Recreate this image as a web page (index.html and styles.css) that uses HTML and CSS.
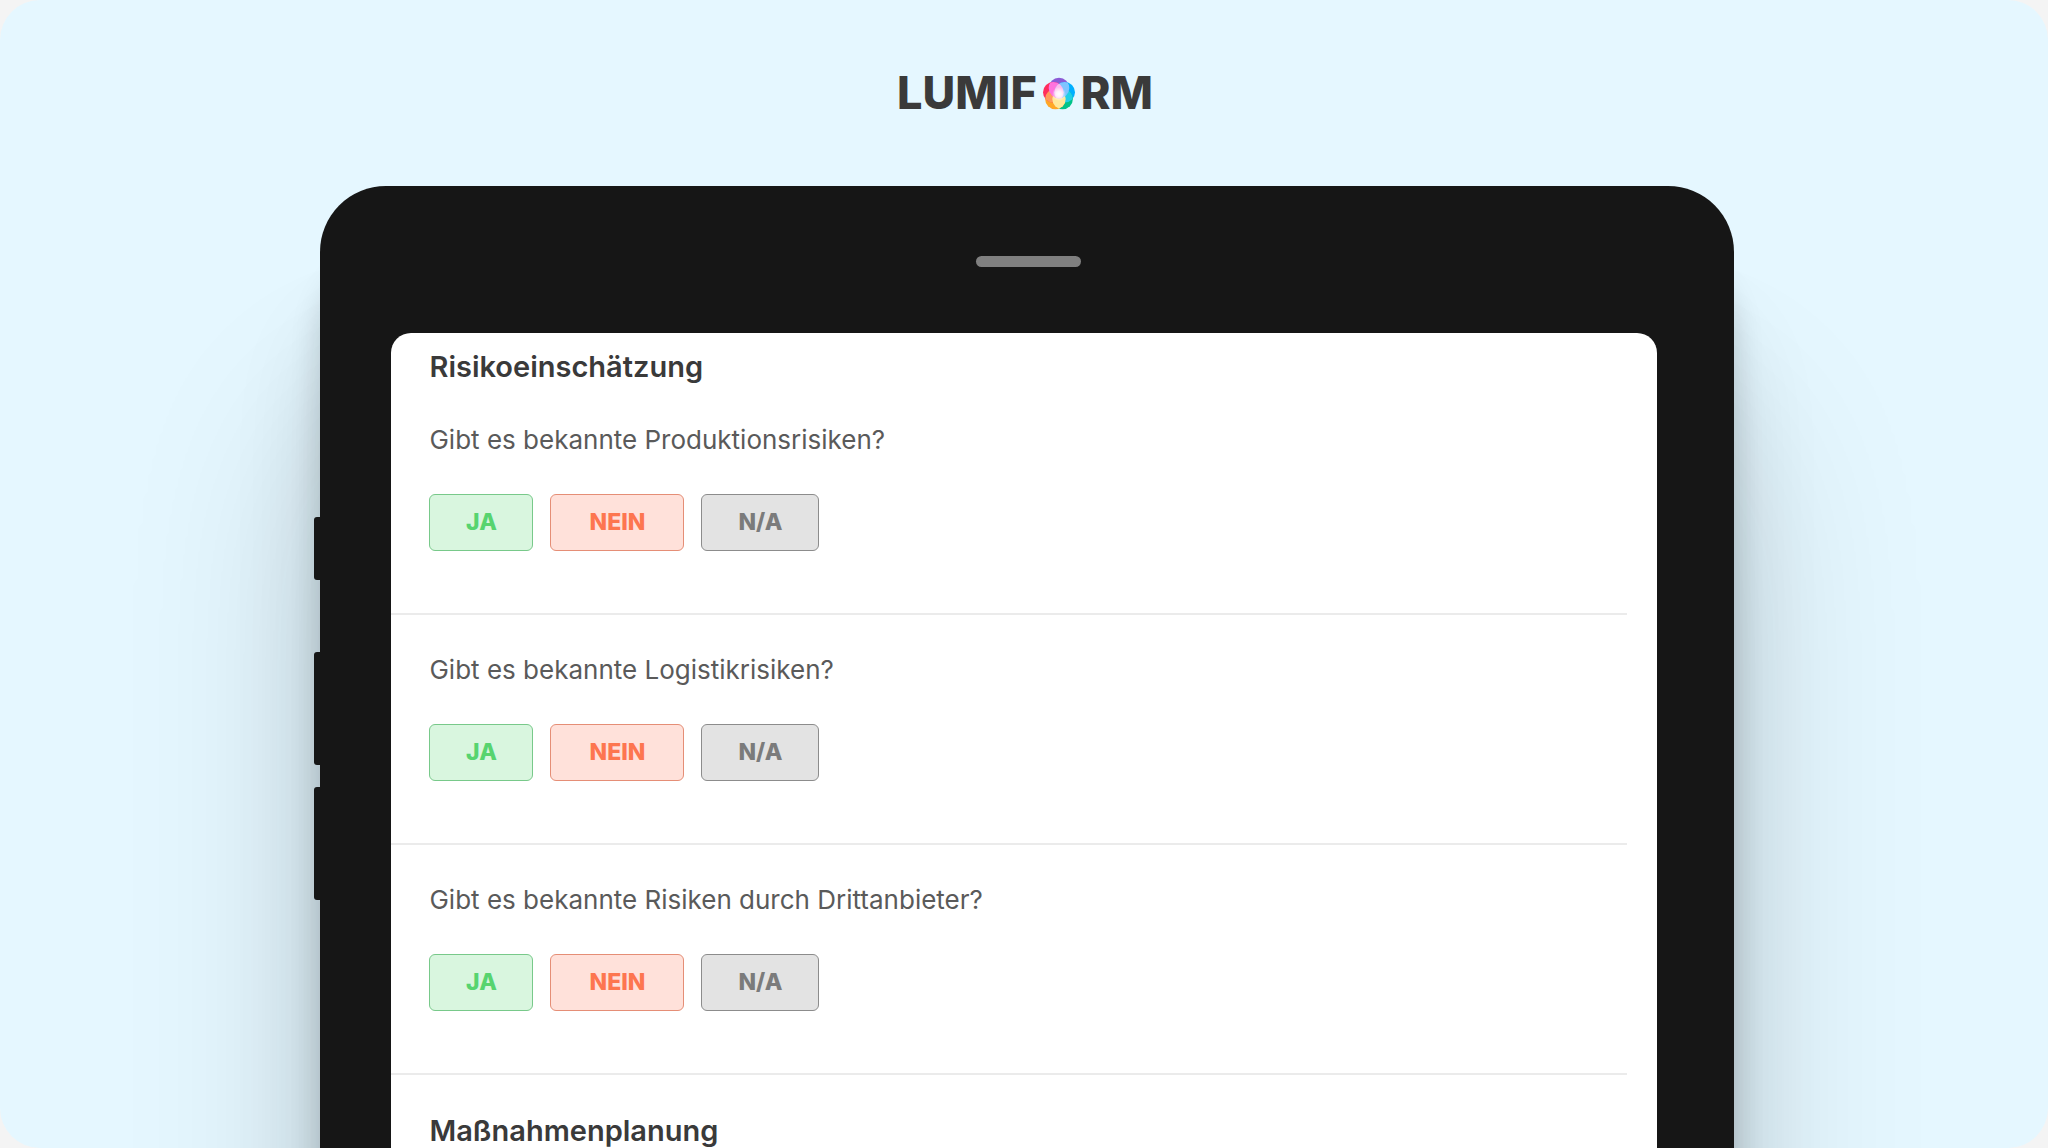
FILE: index.html
```html
<!DOCTYPE html>
<html lang="de">
<head>
<meta charset="utf-8">
<meta name="viewport" content="width=device-width, initial-scale=1">
<title>Lumiform</title>
<link rel="stylesheet" href="styles.css">
</head>
<body>
<div class="stage">
  <header class="logo">
    <span>LUMIF</span>
    <svg class="logo-mark" viewBox="0 0 32 33" aria-hidden="true">
      <defs>
        <clipPath id="top"><circle cx="16" cy="11" r="10.3"/></clipPath>
        <clipPath id="right"><circle cx="21.7" cy="15.2" r="10.3"/></clipPath>
        <clipPath id="bottom-right"><circle cx="19.6" cy="22" r="10.3"/></clipPath>
        <clipPath id="left"><circle cx="10.3" cy="15.2" r="10.3"/></clipPath>
        <radialGradient id="glow">
          <stop offset="0" stop-color="#fff"/>
          <stop offset=".4" stop-color="#fff" stop-opacity=".8"/>
          <stop offset="1" stop-color="#fff" stop-opacity="0"/>
        </radialGradient>
      </defs>
      <circle cx="16" cy="11" r="10.3" fill="#8b5ad6"/>
      <circle cx="21.7" cy="15.2" r="10.3" fill="#00b0ff"/>
      <circle cx="19.6" cy="22" r="10.3" fill="#00c388"/>
      <circle cx="12.4" cy="22" r="10.3" fill="#ffa726"/>
      <circle cx="10.3" cy="15.2" r="10.3" fill="#ff2d5c"/>
      <circle cx="12.4" cy="22" r="10.3" fill="#ff9a5c" clip-path="url(#left)"/>
      <circle cx="19.6" cy="22" r="10.3" fill="#20cfe6" clip-path="url(#right)"/>
      <circle cx="12.4" cy="22" r="10.3" fill="#ffe89a" clip-path="url(#bottom-right)"/>
      <circle cx="16" cy="11" r="10.3" fill="#ff73de" clip-path="url(#left)"/>
      <circle cx="16" cy="11" r="10.3" fill="#80c4ff" clip-path="url(#right)"/>
      <g clip-path="url(#top)">
        <circle cx="10.3" cy="15.2" r="10.3" fill="#ffb8ee" clip-path="url(#right)"/>
      </g>
      <circle cx="16" cy="17" r="7" fill="url(#glow)"/>
    </svg>
    <span>RM</span>
  </header>

  <div class="device">
    <i class="key key-mute"></i>
    <i class="key key-up"></i>
    <i class="key key-down"></i>
    <div class="speaker"></div>
    <main class="screen">
      <h2>Risikoeinschätzung</h2>
      <section class="question">
        <p>Gibt es bekannte Produktionsrisiken?</p>
        <div class="answers">
          <button class="yes" type="button">JA</button>
          <button class="no" type="button">NEIN</button>
          <button class="na" type="button">N/A</button>
        </div>
      </section>
      <section class="question">
        <p>Gibt es bekannte Logistikrisiken?</p>
        <div class="answers">
          <button class="yes" type="button">JA</button>
          <button class="no" type="button">NEIN</button>
          <button class="na" type="button">N/A</button>
        </div>
      </section>
      <section class="question">
        <p>Gibt es bekannte Risiken durch Drittanbieter?</p>
        <div class="answers">
          <button class="yes" type="button">JA</button>
          <button class="no" type="button">NEIN</button>
          <button class="na" type="button">N/A</button>
        </div>
      </section>
      <h2>Maßnahmenplanung</h2>
    </main>
  </div>
</div>
</body>
</html>
```

FILE: styles.css
```css
* {
  box-sizing: border-box;
}

body {
  margin: 0;
  background: #f4f4f4;
  font-family: Inter, "Liberation Sans", sans-serif;
  color: #3a3a3a;
}

.stage {
  display: flex;
  flex-direction: column;
  height: 100vh;
  overflow: hidden;
  padding-left: 6px;
  border-radius: 40px;
  background: #e5f7ff;
}

.logo {
  display: flex;
  flex: none;
  align-items: center;
  justify-content: center;
  gap: 6px;
  height: 186px;
  padding-right: 4px;
  font-size: 45px;
  font-weight: 800;
  line-height: 48px;
}

.logo-mark {
  width: 32px;
  height: 33px;
}

.device {
  position: relative;
  flex: 1 0 auto;
  display: flex;
  flex-direction: column;
  width: 69.2%;
  margin: 0 auto;
  padding: 70px 77px 0 71px;
  border-radius: 66px 66px 0 0;
  background: #161616;
  box-shadow:
    0 80px 30px rgba(10, 20, 20, .16),
    0 140px 90px rgba(10, 20, 20, .12),
    0 240px 200px rgba(10, 20, 20, .16);
}

.key {
  position: absolute;
  left: -6px;
  width: 8px;
  border-radius: 3px 0 0 3px;
  background: #161616;
}

.key-mute {
  top: 331px;
  height: 63px;
}

.key-up {
  top: 466px;
  height: 113px;
}

.key-down {
  top: 601px;
  height: 113px;
}

.speaker {
  align-self: center;
  width: 105px;
  height: 11px;
  margin: 0 0 66px 8px;
  border-radius: 6px;
  background: #808080;
}

.screen {
  flex: 1 0 auto;
  padding: 16px 30px 0 0;
  border-radius: 20px 20px 0 0;
  background: #fff;
}

h2 {
  margin: 0;
  padding-left: 38px;
  font-size: 29px;
  font-weight: 600;
  line-height: 36px;
}

.question {
  padding: 39px 0 62px 38px;
  border-bottom: 2px solid #ebebeb;
}

.question p {
  margin: 0 0 38px;
  font-size: 26px;
  line-height: 32px;
  color: #5a5a5a;
}

.answers {
  display: flex;
  gap: 17px;
}

button {
  height: 57px;
  padding: 0 0 2px;
  border: 1px solid;
  border-radius: 6px;
  font-family: inherit;
  font-size: 23px;
  font-weight: 800;
  line-height: 28px;
}

.yes {
  width: 104px;
  border-color: #78c98a;
  background: #d9f6df;
  color: #57d46f;
}

.no {
  width: 134px;
  border-color: #e58e76;
  background: #ffe1da;
  color: #fd7650;
}

.na {
  width: 118px;
  border-color: #8c8c8c;
  background: #e3e3e3;
  color: #7b7b7b;
}

.question + h2 {
  padding-top: 38px;
}
```
